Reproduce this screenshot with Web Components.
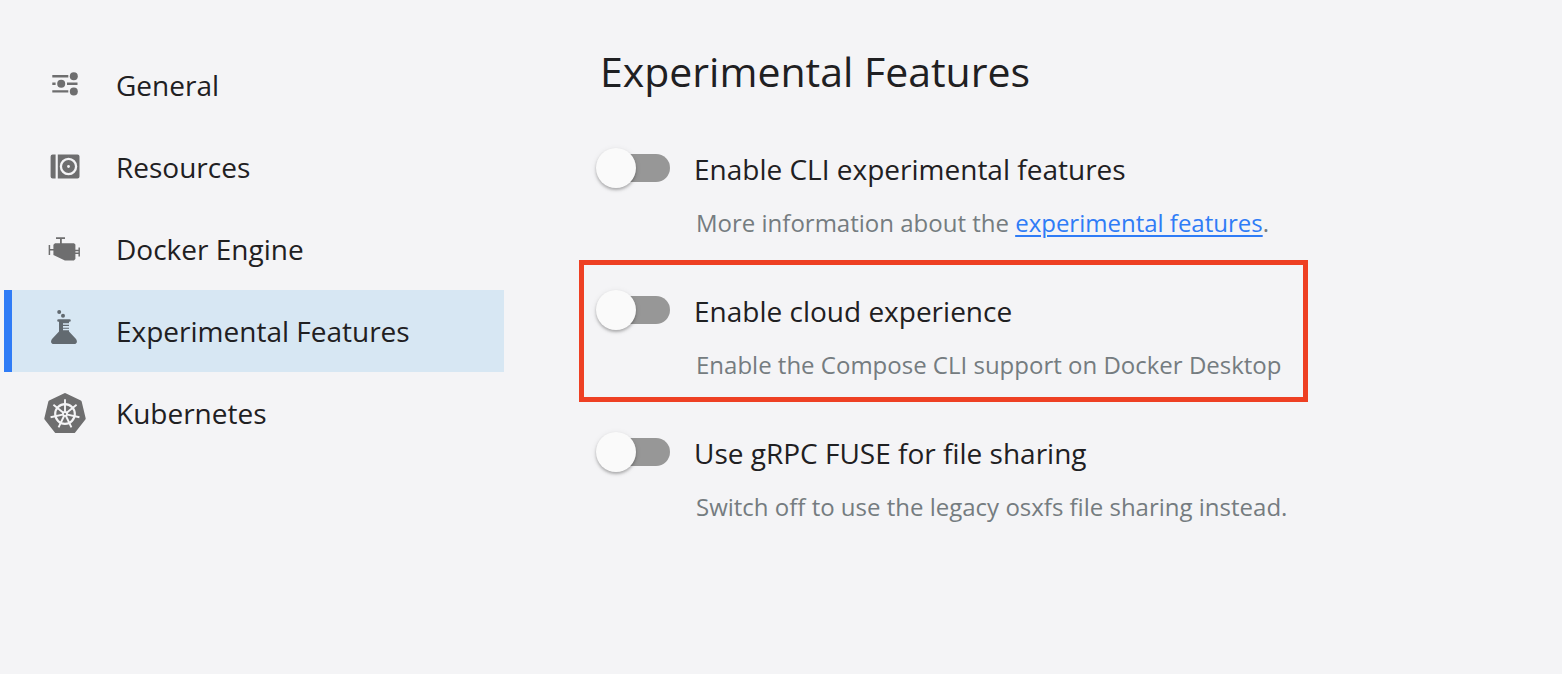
<!DOCTYPE html>
<html lang="en">
<head>
<meta charset="utf-8">
<meta name="viewport" content="width=device-width, initial-scale=1">
<title>Preferences – Experimental Features</title>
<style>
  body {
    margin: 0;
    min-height: 100vh;
    background: #f4f4f6;
    color: #1f2022;
    font-family: "Open Sans", "Noto Sans", sans-serif;
    font-size: 28px;
    line-height: 38px;
  }
  a { color: #2f7cf6; text-decoration-thickness: 2px; text-underline-offset: 3px; }
</style>
</head>
<body>
<preferences-page>
  <preferences-nav slot="nav">
    <nav-item icon="sliders" href="#general">General</nav-item>
    <nav-item icon="disk" href="#resources">Resources</nav-item>
    <nav-item icon="engine" href="#engine">Docker Engine</nav-item>
    <nav-item icon="flask" href="#experimental" active>Experimental Features</nav-item>
    <nav-item icon="helm" href="#kubernetes">Kubernetes</nav-item>
  </preferences-nav>
  <preferences-section heading="Experimental Features">
    <toggle-setting label="Enable CLI experimental features">More information about the <a href="#docs">experimental features</a>.</toggle-setting>
    <toggle-setting label="Enable cloud experience" highlighted>Enable the Compose CLI support on Docker Desktop</toggle-setting>
    <toggle-setting label="Use gRPC FUSE for file sharing">Switch off to use the legacy osxfs file sharing instead.</toggle-setting>
  </preferences-section>
</preferences-page>

<script>
const spokes = Array.from({ length: 7 }, (_, i) =>
  `<g transform="rotate(${i * 360 / 7} 25 25)"><path d="M25 22.5V10.200" stroke="#f4f4f6" stroke-width="1.900"/></g>`).join("");

const icons = {
  sliders: `<g fill="currentColor"><path d="M12.300 14h16v2.400h-16zM12.300 21.600h3.300V24h-3.300zM27 21.600h10.500V24H27zM12.300 29.200h16v2.400h-16z"/>
    <circle cx="33.800" cy="15.200" r="4"/><circle cx="21.200" cy="22.800" r="4"/><circle cx="33.800" cy="30.400" r="4"/></g>`,
  disk: `<path fill="currentColor" d="M12.600 11.500h3v24h-3a2 2 0 0 1-2-2v-20a2 2 0 0 1 2-2zM17.800 11.500h19.700a2 2 0 0 1 2 2v20a2 2 0 0 1-2 2H17.800z"/>
    <circle cx="28.500" cy="23.500" r="7.600" fill="none" stroke="#f4f4f6" stroke-width="2.300"/><circle cx="28.500" cy="23.500" r="1.400" fill="#f4f4f6"/>`,
  engine: `<path fill="currentColor" d="M15 18.200h19l1.400 1.400v14.400l-1.500 1.500h-9L13.400 30V19.800zM16 12.200h9v1.700h-9zM20 13h1.800v6H20z"/>
    <path fill="none" stroke="currentColor" stroke-width="1.500" d="M9.400 20v10M9 24.700h5M39.200 22.500v9M35 25.600h4M35 28.200h4"/>`,
  flask: `<g fill="currentColor"><circle cx="19.200" cy="4.900" r="2"/><circle cx="23" cy="8.700" r="2"/>
    <path d="M18.500 12.200h11a1 1 0 0 1 0 2.600H29v1.400h-6v1.600h6v1.200h-6v1.700h6v1h-6v1.500h6v1.300l7 7.500c1.800 2.600.800 5-1.500 5H13.500c-2.300 0-3.300-2.400-1.500-5l7-7.500V14.800h-.5a1 1 0 0 1 0-2.600z"/></g>`,
  helm: `<path fill="currentColor" stroke="currentColor" stroke-width="3" stroke-linejoin="round" d="M25 5.500 40.200 12.800 44.200 29.500 34 42.500H16L5.800 29.500 9.800 12.800z"/>
    <circle cx="25" cy="25" r="9.800" fill="none" stroke="#f4f4f6" stroke-width="2.200"/>
    ${spokes}<circle cx="25" cy="25" r="3" fill="#f4f4f6"/><circle cx="25" cy="25" r="1.100" fill="currentColor"/>`
};

class PreferencesPage extends HTMLElement {
  constructor() {
    super();
    this.attachShadow({ mode: "open" }).innerHTML = `
      <style>
        :host { display: grid; grid-template-columns: 504px minmax(0, 1fr); column-gap: 75px; align-items: start; padding-top: 44px; }
        main { display: block; }
      </style>
      <slot name="nav"></slot>
      <main><slot></slot></main>`;
  }
}

class PreferencesNav extends HTMLElement {
  constructor() {
    super();
    this.attachShadow({ mode: "open" }).innerHTML = `
      <style>
        :host { display: block; padding-left: 4px; }
        nav { display: flex; flex-direction: column; }
      </style>
      <nav aria-label="Preferences"><slot></slot></nav>`;
  }
}

class NavItem extends HTMLElement {
  constructor() {
    super();
    this.attachShadow({ mode: "open" }).innerHTML = `
      <style>
        :host { display: block; }
        a { display: flex; align-items: center; gap: 28px; box-sizing: border-box; min-height: 82px; padding-left: 28px; border-left: 8px solid transparent; color: inherit; text-decoration: none; }
        svg { flex: none; width: 48px; height: 48px; color: #6e6e6f; }
        :host([active]) a { background: #d7e7f3; border-left-color: #2f7cf6; }
        :host([active]) svg { color: #626a70; }
      </style>
      <a href="${this.getAttribute("href")}"${this.hasAttribute("active") ? ' aria-current="page"' : ""}>
        <svg viewBox="0 0 48 48" aria-hidden="true">${icons[this.getAttribute("icon")]}</svg>
        <span><slot></slot></span>
      </a>`;
  }
}

class PreferencesSection extends HTMLElement {
  constructor() {
    super();
    this.attachShadow({ mode: "open" }).innerHTML = `
      <style>
        :host { display: block; }
        h1 { margin: 0 0 20px; padding-left: 21px; font-size: 41px; line-height: 54px; font-weight: 400; }
      </style>
      <h1>${this.getAttribute("heading")}</h1>
      <slot></slot>`;
  }
}

class ToggleSetting extends HTMLElement {
  constructor() {
    super();
    this.attachShadow({ mode: "open" }).innerHTML = `
      <style>
        :host { display: block; box-sizing: border-box; width: fit-content; min-height: 142px; padding: 22px 21px 12px 12px; border: 5px solid transparent; }
        :host([highlighted]) { border-color: #ee4023; }
        .row { display: flex; align-items: flex-start; gap: 24px; }
        input { appearance: none; position: relative; flex: none; display: flex; align-items: center; width: 74px; height: 46px; margin: 0; cursor: pointer; }
        input::before { content: ""; width: 72px; height: 28px; margin-left: 2px; border-radius: 14px; background: #979797; }
        input::after { content: ""; position: absolute; left: 0; top: 3px; width: 40px; height: 40px; border-radius: 50%; background: #fafafa; box-shadow: 0 2px 3px rgba(0,0,0,.26), 0 1px 6px rgba(0,0,0,.08); }
        input:checked::before { background: #2f7cf6; }
        input:checked::after { left: 34px; }
        label { padding-top: 5px; cursor: pointer; }
        p { margin: 15px 0 0; padding-left: 100px; font-size: 24px; line-height: 34px; color: #757c80; }
      </style>
      <div class="row">
        <input type="checkbox" role="switch" id="toggle" aria-describedby="help">
        <label for="toggle">${this.getAttribute("label")}</label>
      </div>
      <p id="help"><slot></slot></p>`;
  }
}

customElements.define("preferences-page", PreferencesPage);
customElements.define("preferences-nav", PreferencesNav);
customElements.define("nav-item", NavItem);
customElements.define("preferences-section", PreferencesSection);
customElements.define("toggle-setting", ToggleSetting);
</script>
</body>
</html>
